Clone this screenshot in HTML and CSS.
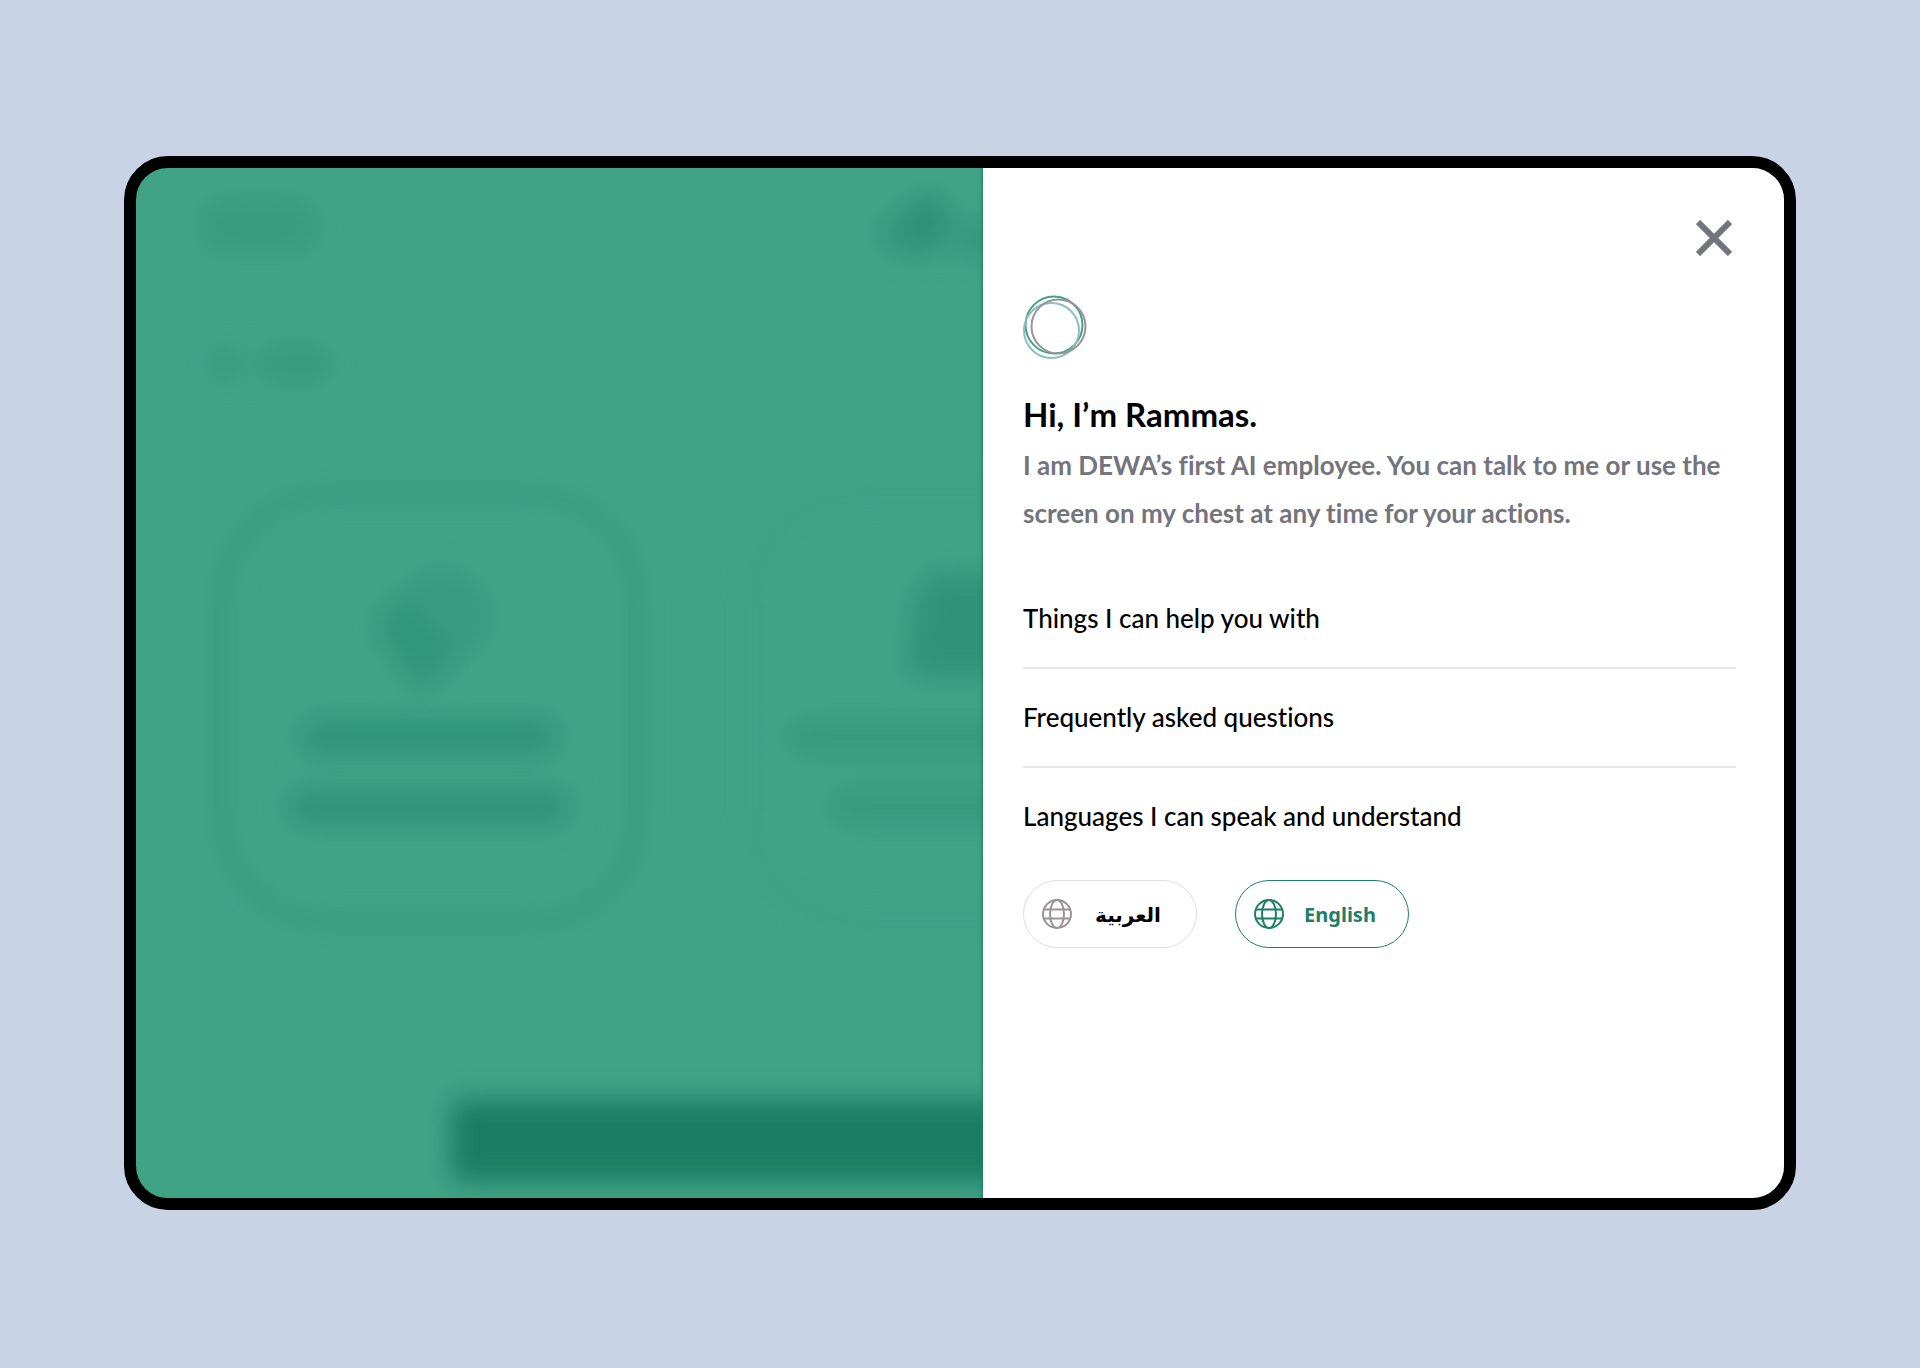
FILE: index.html
```html
<!DOCTYPE html>
<html lang="en">
<head>
<meta charset="utf-8">
<meta name="viewport" content="width=device-width, initial-scale=1">
<title>Rammas</title>
<link rel="stylesheet" href="styles.css">
</head>
<body>
<div class="device">
  <div class="home" aria-hidden="true">
    <div class="home-header">
      <div class="brand"></div>
      <svg class="emblem" width="180" height="76" viewBox="0 0 180 76"><ellipse cx="44" cy="46" rx="38" ry="22" opacity=".5"/><ellipse cx="54" cy="34" rx="20" ry="30" transform="rotate(30 54 34)"/><rect x="86" y="34" width="94" height="34" opacity=".6"/></svg>
    </div>
    <div class="back"><span class="back-arrow"></span><span class="back-label"></span></div>
    <div class="cards">
      <div class="card">
        <svg class="card-icon" width="120" height="120" viewBox="0 0 120 120"><circle cx="73" cy="42" r="46" opacity=".5"/><ellipse cx="30" cy="54" rx="20" ry="28" opacity=".8"/><ellipse cx="54" cy="86" rx="24" ry="28" opacity=".8"/></svg>
        <span class="line line-mid"></span>
        <span class="line line-long"></span>
      </div>
      <div class="card card-faint">
        <svg class="card-icon" width="120" height="120" viewBox="0 0 120 120"><path d="M30 0H110V102H8L16 24Z"/></svg>
        <span class="line line-full"></span>
        <span class="line line-mid"></span>
      </div>
      <div class="card card-faint"></div>
    </div>
    <div class="talk-bar"></div>
  </div>

  <main class="panel">
    <button class="close" type="button" aria-label="Close">
      <svg width="36" height="36" viewBox="0 0 36 36"><path d="M2 2L34 34M34 2L2 34"/></svg>
    </button>
    <svg class="rammas" width="64" height="64" viewBox="0 0 64 64" aria-hidden="true">
      <circle cx="31" cy="30" r="28.5" stroke="#41a386"/>
      <circle cx="28.5" cy="35.5" r="27.5" stroke="#8bbfc0"/>
      <circle cx="35.500" cy="31.5" r="27" stroke="#9c9196"/>
    </svg>
    <h1 class="title">Hi, I’m Rammas.</h1>
    <p class="intro">I am DEWA’s first AI employee. You can talk to me or use the screen on my chest at any time for your actions.</p>
    <nav class="topics">
      <a class="topic" href="#help">Things I can help you with</a>
      <a class="topic" href="#faq">Frequently asked questions</a>
    </nav>
    <h2 class="topic">Languages I can speak and understand</h2>
    <div class="languages">
      <button class="language" type="button" lang="ar">
        <svg class="globe" width="30" height="30" viewBox="0 0 30 30" aria-hidden="true"><circle cx="15" cy="15" r="14"/><ellipse cx="15" cy="15" rx="7" ry="14"/><path d="M2 10.500H28M2 19.500H28"/></svg>
        <span class="language-name">العربية</span>
      </button>
      <button class="language language-active" type="button" aria-pressed="true">
        <svg class="globe" width="30" height="30" viewBox="0 0 30 30" aria-hidden="true"><circle cx="15" cy="15" r="14"/><ellipse cx="15" cy="15" rx="7" ry="14"/><path d="M2 10.500H28M2 19.500H28"/></svg>
        <span class="language-name">English</span>
      </button>
    </div>
  </main>
</div>
</body>
</html>
```
FILE: styles.css
```css
* { box-sizing: border-box; }

body {
  margin: 0;
  min-height: 100vh;
  padding: 156px 124px 158px;
  display: flex;
  background: #c8d4e5;
  color: #000;
  font-family: Lato, "DejaVu Sans", sans-serif;
  font-variant-ligatures: none;
}

.device {
  flex: 1;
  display: grid;
  grid-template-columns: 847fr 801fr;
  border: 12px solid #000;
  border-radius: 44px;
  background: #41a386;
  overflow: hidden;
}

/* Home screen, dimmed and out of focus behind the panel */
.home {
  grid-area: 1 / 1 / 2 / 3;
  min-width: 0;
  padding: 20px 79px 16px;
  display: flex;
  flex-direction: column;
  filter: blur(13px);
}

.home-header {
  display: grid;
  grid-template-columns: 1fr auto 1fr;
  align-items: center;
  height: 76px;
}

.brand {
  width: 112px;
  height: 52px;
  margin-left: -12px;
  border-radius: 16px;
  background: #3b9a7d;
}

.emblem { fill: #2e9074; }

.back {
  display: flex;
  gap: 20px;
  margin: 84px 0 0 -4px;
}

.back-arrow {
  width: 30px;
  height: 32px;
  background: #3b9c7f;
}

.back-label {
  width: 68px;
  height: 32px;
  border-radius: 16px;
  background: #38987c;
}

.cards {
  display: grid;
  grid-template-columns: repeat(3, 1fr);
  gap: 102px;
  margin-top: 108px;
}

.card {
  height: 440px;
  padding-top: 72px;
  display: flex;
  flex-direction: column;
  align-items: center;
  border: 14px solid #3a9c7f;
  border-radius: 110px;
}

.card-faint { border-color: #3d9f82; }

.card-icon {
  margin-bottom: 26px;
  overflow: visible;
  fill: #309377;
}

.line {
  height: 34px;
  border-radius: 16px;
  margin-bottom: 36px;
  background: #309377;
}

.line-mid { width: 256px; }
.line-long { width: 280px; }
.line-full { width: 340px; }

.card-faint .line { background: #37997c; }

.talk-bar {
  width: 1018px;
  max-width: 100%;
  height: 82px;
  margin: auto auto 0;
  border-radius: 12px;
  background: #1b7d63;
}

.panel {
  grid-area: 1 / 2;
  z-index: 1;
  display: flex;
  flex-direction: column;
  align-items: flex-start;
  padding: 48px 48px 48px 40px;
  background: #fff;
  box-shadow: 0 0 3px 1px #1e7f66;
}

button {
  font: inherit;
  cursor: pointer;
}

.close {
  align-self: flex-end;
  display: flex;
  padding: 4px;
  border: 0;
  background: none;
}

.close svg {
  stroke: #73747c;
  stroke-width: 6;
}

.rammas {
  margin-top: 35px;
  fill: none;
  stroke-width: 2;
}

.title {
  margin: 35px 0 0;
  font-size: 33px;
  line-height: 40px;
  font-weight: 700;
}

.intro {
  margin: 7px 0 0;
  font-size: 26px;
  line-height: 48px;
  font-weight: 700;
  color: #73747c;
}

.topics {
  align-self: stretch;
  display: flex;
  flex-direction: column;
  margin-top: 33px;
}

.topic {
  margin: 0;
  padding: 30px 0 31px;
  font-size: 26px;
  line-height: 36px;
  font-weight: 500;
  color: #000;
  text-decoration: none;
}

.topics .topic { border-bottom: 2px solid #e8e8e8; }

.languages {
  display: flex;
  gap: 38px;
  margin-top: 15px;
}

.language {
  display: flex;
  align-items: center;
  width: 174px;
  height: 68px;
  padding: 0 18px;
  border: 1px solid #dedede;
  border-radius: 34px;
  background: #fff;
  color: #000;
  font-family: "Noto Sans", "DejaVu Sans", sans-serif;
  font-size: 20px;
  font-weight: 700;
}

.language-active {
  border-color: #1e7f66;
  color: #1e7f66;
}

.language-name {
  flex: 1;
  padding-left: 6px;
  text-align: center;
}

.globe {
  fill: none;
  stroke: #9c9196;
  stroke-width: 2;
}

.language-active .globe { stroke: #1e7f66; }
```
